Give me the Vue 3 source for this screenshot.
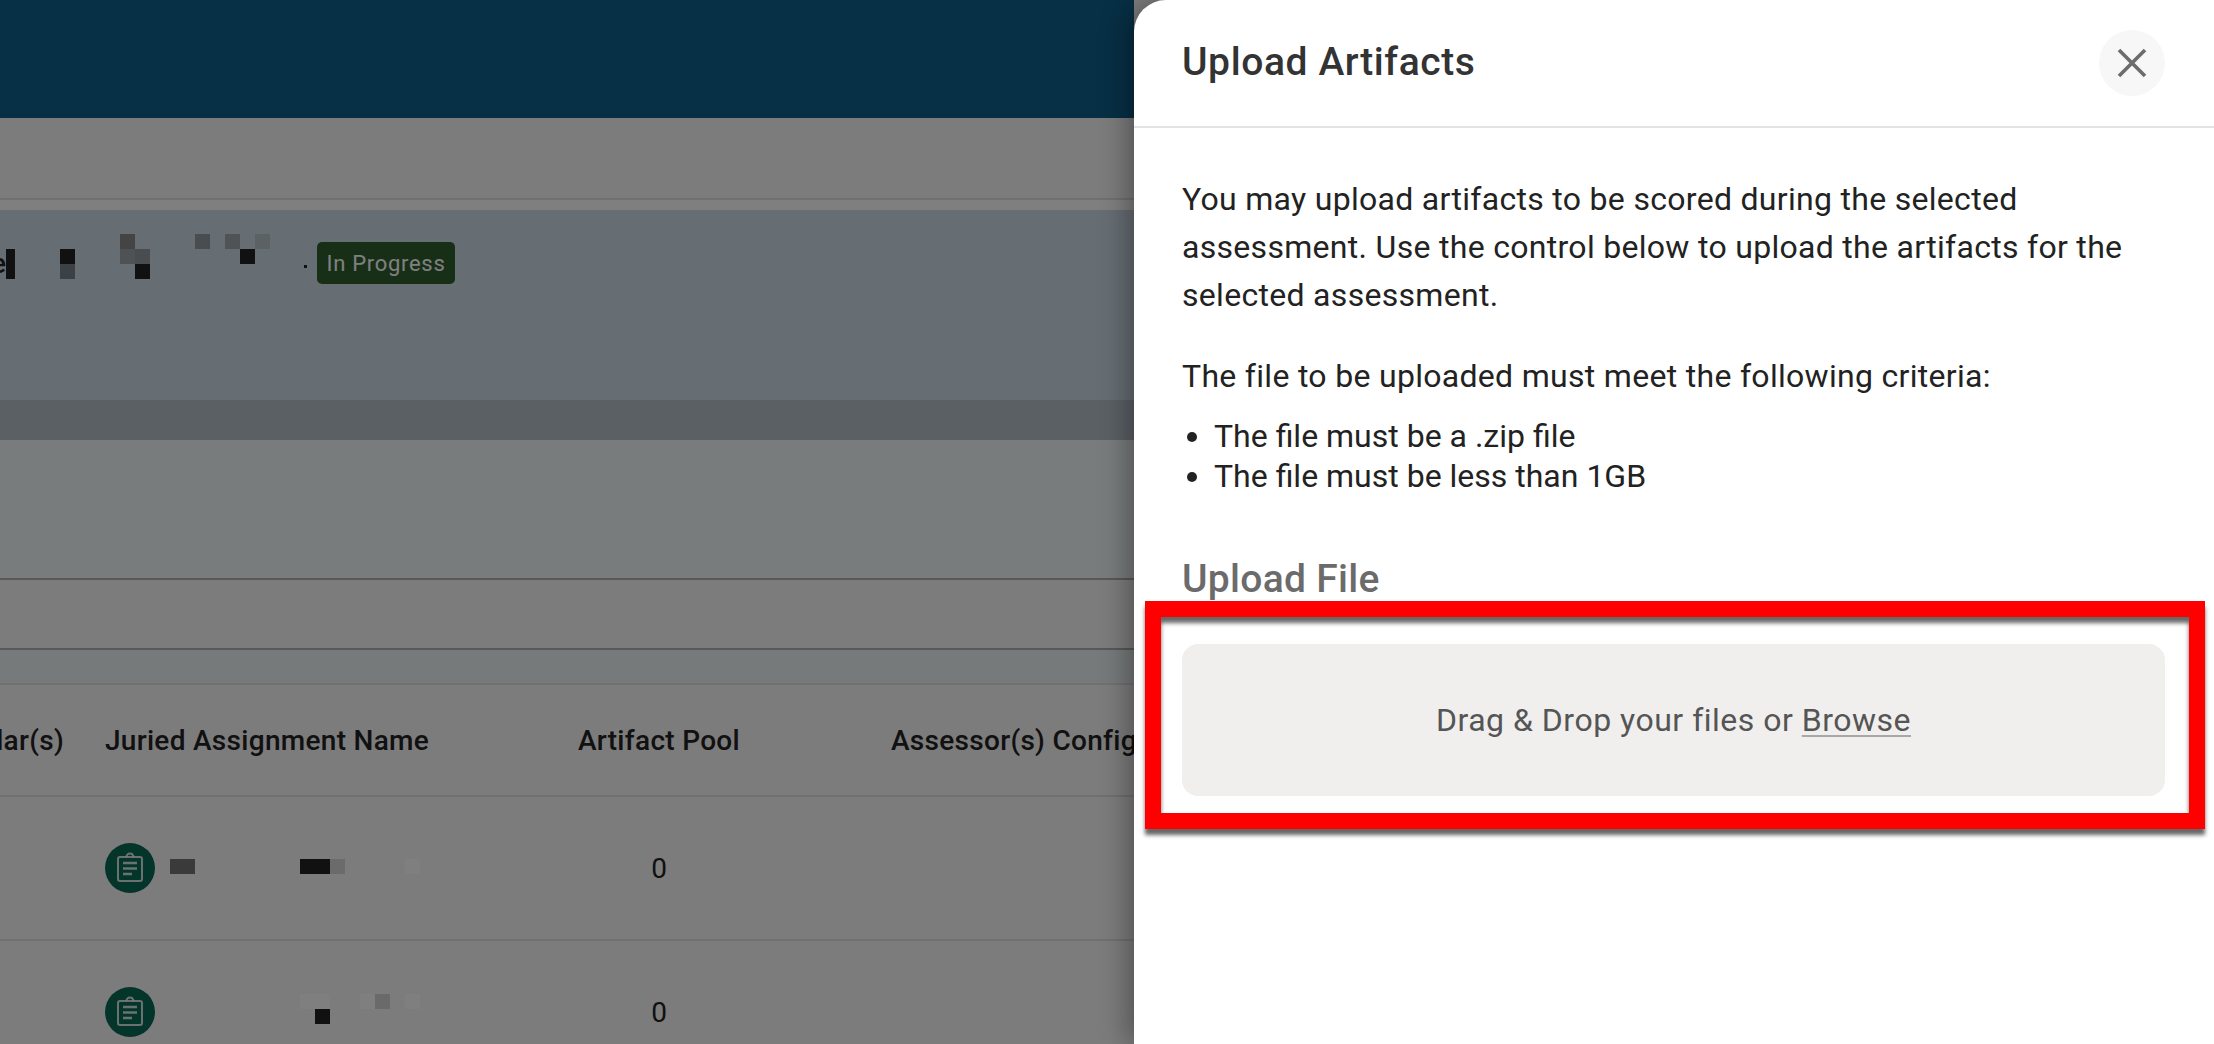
<script setup>
const heroBlocks = [
  { x: 6, y: 39, w: 9, h: 30, c: '#222222' },
  { x: 60, y: 39, w: 15, h: 15, c: '#222222' },
  { x: 60, y: 54, w: 15, h: 15, c: '#78828a' },
  { x: 120, y: 24, w: 15, h: 15, c: '#888888' },
  { x: 120, y: 39, w: 15, h: 15, c: '#9ea4aa' },
  { x: 135, y: 39, w: 15, h: 15, c: '#949aa0' },
  { x: 135, y: 54, w: 15, h: 15, c: '#222222' },
  { x: 195, y: 24, w: 15, h: 15, c: '#949aa0' },
  { x: 225, y: 24, w: 15, h: 15, c: '#a0a6ac' },
  { x: 255, y: 24, w: 15, h: 15, c: '#b8c2c8' },
  { x: 240, y: 39, w: 15, h: 15, c: '#222222' },
  { x: 304, y: 55, w: 3, h: 3, c: '#222222' },
]
const rows = [
  {
    blocks: [
      { x: 65, y: 21, w: 25, h: 15, c: '#747474' },
      { x: 195, y: 21, w: 30, h: 15, c: '#222222' },
      { x: 225, y: 21, w: 15, h: 15, c: '#d6d6d6' },
      { x: 300, y: 21, w: 15, h: 15, c: '#ffffff' },
    ],
  },
  {
    blocks: [
      { x: 195, y: 12, w: 30, h: 15, c: '#ffffff' },
      { x: 210, y: 27, w: 15, h: 15, c: '#222222' },
      { x: 255, y: 12, w: 15, h: 15, c: '#ffffff' },
      { x: 270, y: 12, w: 15, h: 15, c: '#d4d4d4' },
      { x: 300, y: 12, w: 15, h: 15, c: '#ffffff' },
    ],
  },
]
function blockStyle(b) {
  return { left: b.x + 'px', top: b.y + 'px', width: b.w + 'px', height: b.h + 'px', background: b.c }
}
</script>

<template>
  <div class="screen">
    <div class="page">
      <header class="top"></header>
      <div class="band"></div>
      <section class="hero">
        <div class="hero-main">
          <span class="hero-title">Le</span>
          <span v-for="(b, i) in heroBlocks" :key="i" class="mosaic" :style="blockStyle(b)"></span>
          <span class="badge">In Progress</span>
        </div>
        <div class="hero-foot"></div>
      </section>
      <div class="tint tint-a"></div>
      <div class="band-b"></div>
      <div class="tint tint-b"></div>
      <div class="table">
        <div class="row head">
          <div class="c-cal"><span>Scholar(s)</span></div>
          <div class="c-name">Juried Assignment Name</div>
          <div class="c-pool">Artifact Pool</div>
          <div class="c-asr">Assessor(s) Configured</div>
        </div>
        <div v-for="(r, i) in rows" :key="i" class="row body">
          <div class="c-cal"></div>
          <div class="c-name cell-name">
            <svg class="clip" viewBox="0 0 50 50" width="50" height="50">
              <circle cx="25" cy="25" r="25" fill="#096a57" />
              <path d="M15 14h20a2 2 0 0 1 2 2v20a2 2 0 0 1-2 2H15a2 2 0 0 1-2-2V16a2 2 0 0 1 2-2z" fill="none" stroke="#fff" stroke-opacity=".82" stroke-width="2" />
              <path d="M21.500 14a3.500 3.500 0 0 1 7 0" fill="none" stroke="#fff" stroke-opacity=".82" stroke-width="2" />
              <path d="M18 20h14M18 25.500h14M18 31h9" fill="none" stroke="#fff" stroke-opacity=".82" stroke-width="2.500" />
            </svg>
            <span v-for="(b, j) in r.blocks" :key="j" class="mosaic" :style="blockStyle(b)"></span>
          </div>
          <div class="c-pool">0</div>
          <div class="c-asr"></div>
        </div>
      </div>
    </div>
    <div class="overlay"></div>
    <aside class="drawer">
      <div class="drawer-head">
        <h2>Upload Artifacts</h2>
        <button class="close" type="button" aria-label="Close">
          <svg viewBox="0 0 32 32" width="32" height="32">
            <path d="M3 3l26 26M29 3L3 29" fill="none" stroke="#6c6c6c" stroke-width="3.600" />
          </svg>
        </button>
      </div>
      <div class="drawer-body">
        <p class="first">You may upload artifacts to be scored during the selected assessment. Use the control below to upload the artifacts for the selected assessment.</p>
        <p class="second">The file to be uploaded must meet the following criteria:</p>
        <ul>
          <li>The file must be a .zip file</li>
          <li>The file must be less than 1GB</li>
        </ul>
        <h3>Upload File</h3>
        <div class="drop">Drag &amp; Drop your files or&nbsp;<u>Browse</u></div>
      </div>
      <div class="marker"></div>
    </aside>
  </div>
</template>

<style>
html, body { margin: 0; padding: 0; overflow: hidden; background: #fff; }
</style>

<style scoped>
.screen {
  position: relative;
  width: 2214px;
  height: 1044px;
  overflow: hidden;
  font-family: Roboto, "Liberation Sans", sans-serif;
  color: #222;
}
.page { width: 1134px; display: flex; flex-direction: column; }
.top { height: 118px; background: #0e5e8a; }
.band { height: 80px; background: #f8f8f8; border-bottom: 2px solid #e0e0e0; }
.hero { margin-top: 10px; display: flex; flex-direction: column; background: #ccdbe6; }
.hero-main { position: relative; height: 190px; overflow: hidden; }
.hero-title {
  position: absolute;
  right: calc(100% - 6px);
  top: 34px;
  font-size: 28px;
  line-height: 40px;
  font-weight: 500;
  white-space: nowrap;
  color: #222;
}
.hero-foot { height: 40px; background: #b6c0ca; }
.mosaic { position: absolute; }
.badge {
  position: absolute;
  left: 317px;
  top: 32px;
  height: 42px;
  width: 138px;
  display: flex;
  align-items: center;
  justify-content: center;
  border-radius: 5px;
  background: #2f5f2c;
  color: #fff;
  font-size: 22px;
  letter-spacing: 0.7px;
}
.tint { background: #f2f9fb; }
.tint-a { height: 138px; border-bottom: 2px solid #b0b0b0; }
.band-b { height: 68px; background: #f8f8f8; border-bottom: 2px solid #b0b0b0; }
.tint-b { height: 33px; border-bottom: 2px solid #e0e0e0; background: #eef5f6; }
.table { display: flex; flex-direction: column; }
.row {
  display: grid;
  grid-template-columns: 64px 432px 162px 1fr;
  column-gap: 41px;
  align-items: center;
  border-bottom: 2px solid #e0e0e0;
  background: #f8f8f8;
}
.head { height: 110px; font-size: 28px; font-weight: 500; letter-spacing: 0.3px; color: #222; }
.body { height: 142px; font-size: 28px; }
.c-cal { display: flex; justify-content: flex-end; overflow: hidden; white-space: nowrap; }
.c-name { white-space: nowrap; }
.c-pool { text-align: center; white-space: nowrap; }
.c-asr { margin-left: 110px; white-space: nowrap; }
.cell-name { position: relative; height: 60px; display: flex; align-items: center; }
.clip { flex: none; }
.overlay { position: absolute; inset: 0; background: rgba(0, 0, 0, 0.5); }
.drawer {
  position: absolute;
  top: 0;
  right: 0;
  bottom: 0;
  width: 1080px;
  background: #fff;
  border-top-left-radius: 32px;
  box-shadow: -6px 0 28px rgba(0, 0, 0, 0.35);
  color: #222;
}
.drawer-head {
  height: 126px;
  display: flex;
  align-items: center;
  justify-content: space-between;
  padding: 0 49px 0 48px;
  border-bottom: 2px solid #e3e3e3;
}
h2 { margin: 0 0 2px; font-size: 39px; font-weight: 500; letter-spacing: 0.6px; color: #333; }
.close {
  width: 66px;
  height: 66px;
  border: 0;
  padding: 0;
  border-radius: 50%;
  background: #f7f7f7;
  display: flex;
  align-items: center;
  justify-content: center;
}
.drawer-body { padding: 47px 49px 0 48px; font-size: 32px; line-height: 48px; letter-spacing: 0.3px; }
p { margin: 0; }
.second { margin-top: 33px; }
ul { margin: 16px 0 0; padding: 0 0 0 32px; line-height: 40px; letter-spacing: 0; }
h3 { margin: 53px 0 0; font-size: 39px; font-weight: 500; line-height: 60px; letter-spacing: 0.3px; color: #6b6b6b; }
.drop {
  margin-top: 35px;
  height: 152px;
  display: flex;
  align-items: center;
  justify-content: center;
  border-radius: 16px;
  background: #f0efed;
  color: #555;
  letter-spacing: 0.5px;
}
.drop u { text-underline-offset: 4px; text-decoration-color: #a8a8a8; text-decoration-thickness: 2px; }
.marker {
  position: absolute;
  left: 11px;
  top: 601px;
  width: 1028px;
  height: 196px;
  border: 16px solid #f00;
  box-shadow: 0 6px 4px rgba(0, 0, 0, 0.6), inset 0 6px 4px rgba(0, 0, 0, 0.6);
}
</style>
